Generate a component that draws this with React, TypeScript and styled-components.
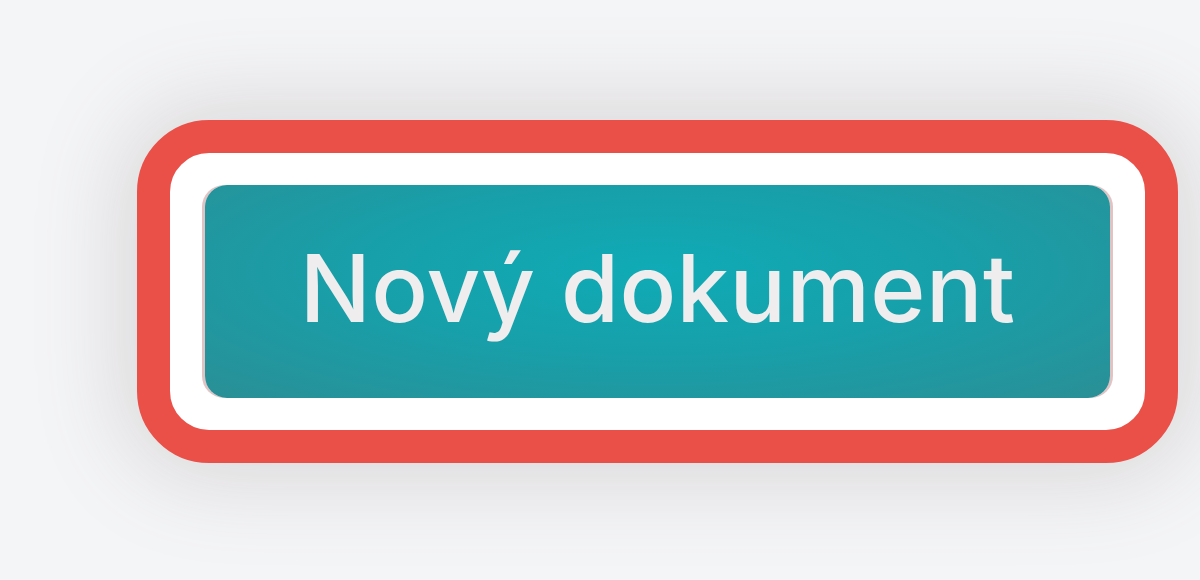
import React from 'react'
import styled, { createGlobalStyle } from 'styled-components'

const GlobalStyle = createGlobalStyle`
  html, body {
    margin: 0;
    padding: 0;
    background: #f4f5f7;
  }
`

const Page = styled.div`
  width: 1200px;
  height: 580px;
  box-sizing: border-box;
  padding: 120px 0 0 137px;
  background: #f4f5f7;
`

const Highlight = styled.div`
  box-sizing: border-box;
  width: 1041px;
  height: 343px;
  border: 33px solid #ea5048;
  border-radius: 72px;
  background: #ffffff;
  padding: 32px 35px;
  box-shadow: 0 0 90px 12px rgba(120, 100, 100, 0.22);
`

const Button = styled.button`
  width: 100%;
  height: 100%;
  border: none;
  border-radius: 22px;
  background: radial-gradient(ellipse at 50% 40%, #0fabb6 0%, #17a0aa 45%, #2a8f96 100%);
  box-shadow: -3px 0 0 #e2c3c4, 3px 0 0 #e2c3c4;
  color: #efeded;
  font-family: Inter, 'Noto Sans', sans-serif;
  font-weight: 500;
  font-size: 94px;
  letter-spacing: 0.4px;
  display: flex;
  align-items: center;
  justify-content: center;
  padding: 0 0 8px;
  cursor: pointer;
`

export default function App() {
  return (
    <Page>
      <GlobalStyle />
      <Highlight>
        <Button>Nový dokument</Button>
      </Highlight>
    </Page>
  )
}
